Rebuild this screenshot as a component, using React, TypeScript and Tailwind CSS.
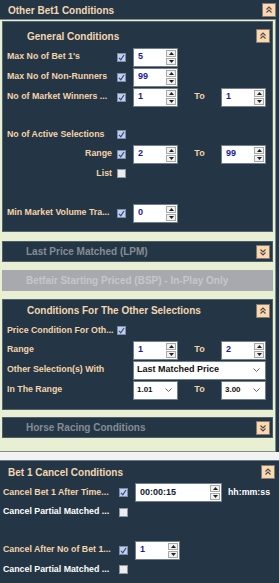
import React from "react";

const labelCls = "text-[8.8px] font-bold text-[#f4d3a9] whitespace-nowrap";
const titleCls = "text-[10px] font-bold text-[#f3d6b2] whitespace-nowrap";

function Chevron({ down = false }: { down?: boolean }) {
  return (
    <div className="w-[14px] h-[14px] bg-[#fcd8b2] border border-[#8a7c6c] flex items-center justify-center">
      <svg width="10" height="10" viewBox="0 0 10 10" fill="none" stroke="#4a4a4a" strokeWidth="1.1">
        {down ? (
          <>
            <polyline points="2.5,2.5 5,5 7.5,2.5" />
            <polyline points="2.5,5.5 5,8 7.5,5.5" />
          </>
        ) : (
          <>
            <polyline points="2.5,4.5 5,2 7.5,4.5" />
            <polyline points="2.5,7.5 5,5 7.5,7.5" />
          </>
        )}
      </svg>
    </div>
  );
}

function Check({ on = true }: { on?: boolean }) {
  return (
    <div
      className={
        "w-[9px] h-[9px] border flex items-center justify-center " +
        (on ? "bg-[#c5cfe0] border-[#7d8ca6]" : "bg-[#ececec] border-[#8f98a2]")
      }
    >
      {on && (
        <svg width="7" height="7" viewBox="0 0 7 7" fill="none" stroke="#2a44a8" strokeWidth="1.2">
          <polyline points="1,3.8 2.8,5.8 6,1" />
        </svg>
      )}
    </div>
  );
}

function Spin({ value, w = "w-[45px]", color = "text-[#1c1c9a]" }: { value: string; w?: string; color?: string }) {
  return (
    <div className={`${w} h-[19px] bg-white border border-[#6f7f8e] flex items-center relative`}>
      <span className={`pl-[4px] text-[9px] font-bold ${color}`}>{value}</span>
      <div className="absolute right-[1px] top-[1px] flex flex-col gap-[1px]">
        <div className="w-[10px] h-[7px] bg-[#f1f1f1] border border-[#a9a9a9] flex items-center justify-center">
          <svg width="5" height="3" viewBox="0 0 5 3"><polygon points="0,3 2.5,0 5,3" fill="#222" /></svg>
        </div>
        <div className="w-[10px] h-[7px] bg-[#f1f1f1] border border-[#a9a9a9] flex items-center justify-center">
          <svg width="5" height="3" viewBox="0 0 5 3"><polygon points="0,0 2.5,3 5,0" fill="#222" /></svg>
        </div>
      </div>
    </div>
  );
}

function Select({ value, w = "w-[45px]", size = "text-[8px]" }: { value: string; w?: string; size?: string }) {
  return (
    <div className={`${w} h-[19px] bg-white border border-[#6f7f8e] flex items-center justify-between pl-[3px] pr-[5px]`}>
      <span className={`${size} font-bold text-[#111]`}>{value}</span>
      <svg width="7" height="4" viewBox="0 0 7 4" fill="none" stroke="#555" strokeWidth="0.9">
        <polyline points="0.5,0.5 3.5,3.5 6.5,0.5" />
      </svg>
    </div>
  );
}

function To() {
  return <div className="w-[43px] text-center text-[9px] font-bold text-[#f4d3a9]">To</div>;
}

function Row({ h = "h-[20px]", children }: { h?: string; children: React.ReactNode }) {
  return <div className={`${h} flex items-center`}>{children}</div>;
}

function Label({ text, right = false }: { text: string; right?: boolean }) {
  return <div className={`w-[110px] ${labelCls} ${right ? "text-right pr-[5px]" : ""}`}>{text}</div>;
}

function CheckSlot({ on, show = true }: { on?: boolean; show?: boolean }) {
  return <div className="w-[16px] flex items-center">{show && <Check on={on} />}</div>;
}

function Collapsed({ title }: { title: string }) {
  return (
    <div className="h-[21px] bg-[#243645] border border-[#4f5f6b] flex items-center justify-between pl-[23px] pr-[2px]">
      <span className="text-[10px] font-bold text-[#858d94]">{title}</span>
      <Chevron down />
    </div>
  );
}

export default function App() {
  return (
    <div className="w-[279px] h-[583px] bg-[#243645] overflow-hidden flex flex-col font-['Liberation_Sans',Arial,sans-serif]">
      <div className="h-[19px] flex items-center justify-between pl-[8px] pr-[3px] pt-[1px]">
        <span className={titleCls}>Other Bet1 Conditions</span>
        <Chevron />
      </div>

      <div className="w-[276px] h-[433px] bg-[#e9efd3] border-t border-b border-r border-[#7f8f86] pl-[2px] pr-[2px] pt-[1px] flex flex-col">
        <div className="h-[211px] bg-[#243645] border border-[#54646f] flex flex-col pl-[4px]">
          <div className="h-[25px] flex items-center justify-between pt-[3px] pl-[20px] pr-[2px]">
            <span className={titleCls}>General Conditions</span>
            <Chevron />
          </div>
          <Row>
            <Label text="Max No of Bet 1's" />
            <CheckSlot on />
            <Spin value="5" />
          </Row>
          <Row>
            <Label text="Max No of Non-Runners" />
            <CheckSlot on />
            <Spin value="99" />
          </Row>
          <Row>
            <Label text="No of Market Winners ..." />
            <CheckSlot on />
            <Spin value="1" />
            <To />
            <Spin value="1" />
          </Row>
          <div className="h-[18px]" />
          <Row h="h-[19px]">
            <Label text="No of Active Selections" />
            <CheckSlot on />
          </Row>
          <Row>
            <Label text="Range" right />
            <CheckSlot on />
            <Spin value="2" />
            <To />
            <Spin value="99" />
          </Row>
          <Row h="h-[19px]">
            <Label text="List" right />
            <CheckSlot on={false} />
          </Row>
          <div className="h-[20px]" />
          <Row>
            <Label text="Min Market Volume Tra..." />
            <CheckSlot on />
            <Spin value="0" />
          </Row>
        </div>

        <div className="mt-[9px]">
          <Collapsed title="Last Price Matched (LPM)" />
        </div>

        <div className="mt-[8px] h-[21px] bg-[#a8a9ae] flex items-center pl-[24px]">
          <span className="text-[10px] font-bold text-[#c5c6cb]">Betfair Starting Priced (BSP) - In-Play Only</span>
        </div>

        <div className="mt-[8px] h-[111px] bg-[#243645] border border-[#54646f] flex flex-col pl-[4px]">
          <div className="h-[21px] flex items-center justify-between pl-[20px] pr-[2px]">
            <span className={titleCls}>Conditions For The Other Selections</span>
            <Chevron />
          </div>
          <Row h="h-[19px]">
            <Label text="Price Condition For Oth..." />
            <CheckSlot on />
          </Row>
          <Row>
            <Label text="Range" />
            <CheckSlot show={false} />
            <Spin value="1" />
            <To />
            <Spin value="2" />
          </Row>
          <Row>
            <Label text="Other Selection(s) With" />
            <CheckSlot show={false} />
            <Select value="Last Matched Price" w="w-[133px]" size="text-[9px]" />
          </Row>
          <Row>
            <Label text="In The Range" />
            <CheckSlot show={false} />
            <Select value="1.01" />
            <To />
            <Select value="3.00" />
          </Row>
        </div>

        <div className="mt-[7px]">
          <Collapsed title="Horse Racing Conditions" />
        </div>
      </div>

      <div className="h-[9px] bg-[#f3f3f3] border-b border-[#6e7a84]" />

      <div className="flex-1 flex flex-col pl-[3px]">
        <div className="h-[22px] flex items-center justify-between pl-[5px] pr-[4px]">
          <span className={titleCls}>Bet 1 Cancel Conditions</span>
          <Chevron />
        </div>
        <Row h="h-[19px]">
          <div className={`w-[116px] ${labelCls}`}>Cancel Bet 1 After Time...</div>
          <CheckSlot on />
          <Spin value="00:00:15" w="w-[87px]" color="text-[#101830]" />
          <span className="ml-[6px] text-[8.8px] font-bold text-white">hh:mm:ss</span>
        </Row>
        <Row>
          <div className="w-[116px] text-[8.8px] font-bold text-white whitespace-nowrap">Cancel Partial Matched ...</div>
          <CheckSlot on={false} />
        </Row>
        <div className="h-[18px]" />
        <Row>
          <div className={`w-[116px] ${labelCls}`}>Cancel After No of Bet 1...</div>
          <CheckSlot on />
          <Spin value="1" />
        </Row>
        <Row h="h-[19px]">
          <div className="w-[116px] text-[8.8px] font-bold text-white whitespace-nowrap">Cancel Partial Matched ...</div>
          <CheckSlot on={false} />
        </Row>
      </div>
    </div>
  );
}
